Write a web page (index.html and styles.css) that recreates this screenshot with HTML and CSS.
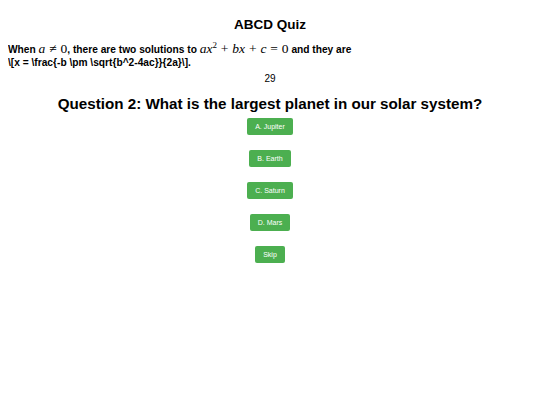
FILE: index.html
```html
<!DOCTYPE html>
<html>
<head>
<meta charset="utf-8">
<link rel="stylesheet" href="styles.css">
</head>
<body>
<h1 class="title">ABCD Quiz</h1>
<p class="intro">When <span class="math"><i>a</i> ≠ 0</span>, there are two solutions to <span class="math"><i>ax</i><sup>2</sup> + <i>bx</i> + <i>c</i> = 0</span> and they are<br>\[x = \frac{-b \pm \sqrt{b^2-4ac}}{2a}\].</p>
<div class="timer">29</div>
<h2 class="question">Question 2: What is the largest planet in our solar system?</h2>
<div class="options">
  <button class="opt">A. Jupiter</button>
  <button class="opt">B. Earth</button>
  <button class="opt">C. Saturn</button>
  <button class="opt">D. Mars</button>
  <button class="opt">Skip</button>
</div>
</body>
</html>
```
FILE: styles.css
```css
html, body { background: #fff; }
body {
  margin: 8px;
  font-family: "Liberation Sans", Arial, sans-serif;
  color: #000;
}
.title {
  font-size: 13.5px;
  font-weight: bold;
  text-align: center;
  margin: 9px 0 0 0;
  line-height: 16px;
}
.intro {
  font-size: 10.2px;
  font-weight: bold;
  margin: 9px 0 0 0;
  line-height: 13px;
}
.math {
  font-family: "Liberation Serif", "DejaVu Serif", serif;
  font-weight: normal;
  font-size: 13.5px;
  word-spacing: 0.5px;
}
.math sup { font-size: 9px; vertical-align: 5px; line-height: 0; }
.timer {
  text-align: center;
  font-size: 10px;
  margin-top: 4px;
  line-height: 12px;
}
.question {
  font-size: 15.2px;
  font-weight: bold;
  text-align: center;
  margin: 9px 0 0 0;
  line-height: 20px;
}
.options {
  display: flex;
  flex-direction: column;
  align-items: center;
  gap: 15px;
  margin-top: 4px;
}
.opt {
  background: #4caf50;
  color: #fff;
  border: none;
  border-radius: 2px;
  font-family: "Liberation Sans", Arial, sans-serif;
  font-size: 7px;
  height: 17px;
  padding: 0 8px;
  margin: 0;
}
```
